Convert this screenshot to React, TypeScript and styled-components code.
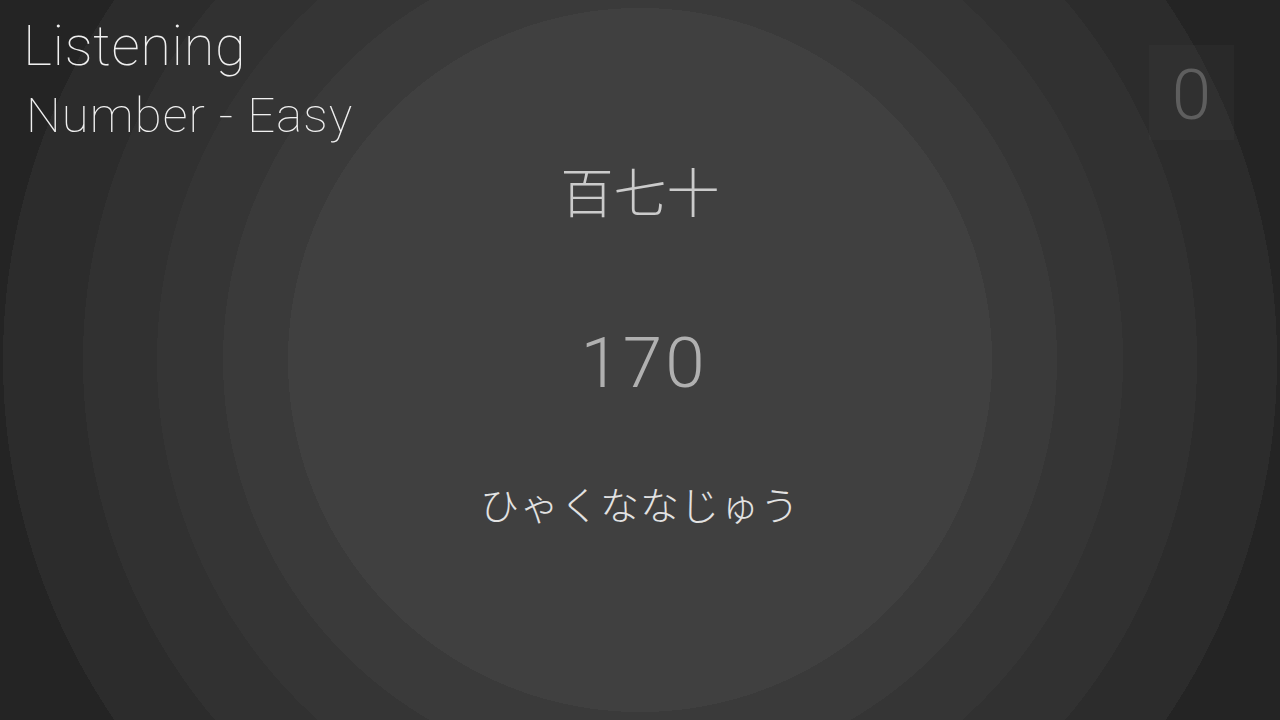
import React from 'react'
import styled, { createGlobalStyle } from 'styled-components'

const GlobalStyle = createGlobalStyle`
  html, body {
    margin: 0;
    padding: 0;
    background: #232323;
  }
  body {
    font-family: Roboto, 'Noto Sans', 'Noto Sans CJK JP', sans-serif;
  }
`

const rings = [
  { color: '#404040', r: 352 },
  { color: '#3a3a3a', r: 417 },
  { color: '#353535', r: 483 },
  { color: '#313131', r: 557 },
  { color: '#2c2c2c', r: 637 },
]

function ringGradient() {
  let prev = 0
  const stops = rings.map((ring) => {
    const s = `${ring.color} ${prev}px ${ring.r}px`
    prev = ring.r
    return s
  })
  return `radial-gradient(circle at 640px 360px, ${stops.join(', ')}, #242424 ${prev}px)`
}

const Screen = styled.div`
  width: 1280px;
  height: 720px;
  overflow: hidden;
  background: ${ringGradient()};
  display: grid;
  grid-template-rows: 160px 1fr;
  color: #e6e6e6;
`

const TopBar = styled.header`
  display: flex;
  justify-content: space-between;
  align-items: flex-start;
  padding: 17px 46px 0 23px;
`

const Titles = styled.div`
  display: flex;
  flex-direction: column;
`

const Mode = styled.h1<{ $size: number; $indent?: number; $gap?: number; $spacing?: number }>`
  margin: 0;
  margin-top: ${(p) => p.$gap ?? 0}px;
  font-family: Roboto, 'Open Sans', sans-serif;
  font-weight: 100;
  font-size: ${(p) => p.$size}px;
  line-height: 1.05;
  padding-left: ${(p) => p.$indent ?? 0}px;
  color: #f0f0f0;
  letter-spacing: ${(p) => p.$spacing ?? 0.6}px;
`

const Score = styled.div`
  width: 85px;
  height: 95px;
  margin-top: 28px;
  padding-top: 4px;
  box-sizing: border-box;
  background: rgba(255, 255, 255, 0.025);
  display: flex;
  align-items: center;
  justify-content: center;
  font-family: Roboto, sans-serif;
  font-weight: 300;
  font-size: 71px;
  color: #5e5e5e;
`

const Card = styled.main`
  display: flex;
  flex-direction: column;
  align-items: center;
`

const Kanji = styled.div`
  margin-top: 4px;
  font-family: 'Noto Sans CJK JP', sans-serif;
  font-weight: 300;
  font-size: 53px;
  line-height: 1;
  color: #cbcbcb;
`

const Digits = styled.div`
  margin-top: 110px;
  padding-left: 8px;
  font-family: Roboto, sans-serif;
  font-weight: 300;
  font-size: 71px;
  line-height: 1;
  color: #b0b0b0;
  letter-spacing: 3px;
`

const Reading = styled.div`
  margin-top: 86px;
  font-family: 'Noto Sans CJK JP', sans-serif;
  font-weight: 300;
  font-size: 39px;
  line-height: 1;
  color: #e2e2e2;
  letter-spacing: 1px;
`

export default function App() {
  return (
    <>
      <GlobalStyle />
      <Screen>
        <TopBar>
          <Titles>
            <Mode $size={56}>Listening</Mode>
            <Mode $size={49} $indent={3} $gap={14} $spacing={1.1}>Number - Easy</Mode>
          </Titles>
          <Score>0</Score>
        </TopBar>
        <Card>
          <Kanji>百七十</Kanji>
          <Digits>170</Digits>
          <Reading>ひゃくななじゅう</Reading>
        </Card>
      </Screen>
    </>
  )
}
